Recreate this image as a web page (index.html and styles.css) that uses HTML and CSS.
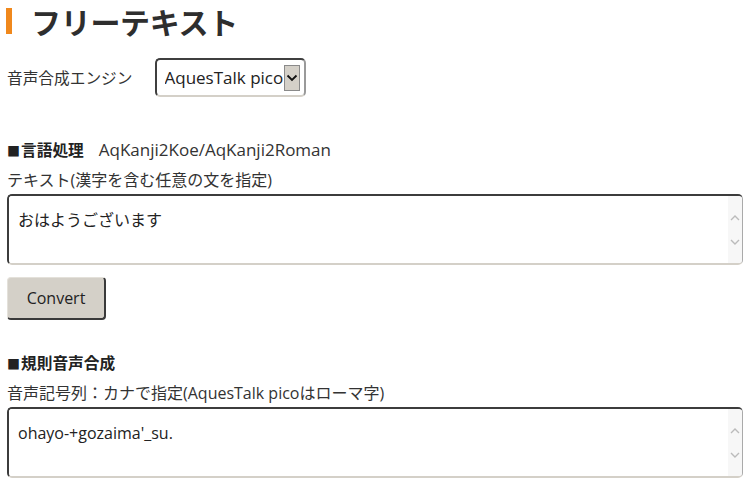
FILE: index.html
```html
<!DOCTYPE html>
<html lang="ja">
<head>
    <meta charset="UTF-8">
    <meta name="viewport" content="width=device-width, initial-scale=1.0">
    <title>フリーテキスト</title>
    <link rel="stylesheet" href="styles.css">
</head>
<body>
    <h1 class="title">フリーテキスト</h1>

    <div class="engine-row">
        <span class="engine-label">音声合成エンジン</span>
        <div class="select-box">
            <select id="engine">
                <option>AquesTalk pico</option>
            </select>
            <span class="select-arrow">
                <svg width="12" height="8" viewBox="0 0 12 8"><path d="M1.5 1.5 L6 6 L10.5 1.5" fill="none" stroke="#111" stroke-width="1.8"/></svg>
            </span>
        </div>
    </div>

    <h2 class="section"><span class="mark">■</span>言語処理<span class="sub">AqKanji2Koe/AqKanji2Roman</span></h2>
    <p class="field-label">テキスト(漢字を含む任意の文を指定)</p>
    <div class="text-box">
        <textarea id="src-text">おはようございます</textarea>
        <div class="scroll-col">
            <svg width="10" height="6" viewBox="0 0 10 6"><path d="M1 5 L5 1 L9 5" fill="none" stroke="#bbb" stroke-width="1.4"/></svg>
            <svg width="10" height="6" viewBox="0 0 10 6"><path d="M1 1 L5 5 L9 1" fill="none" stroke="#bbb" stroke-width="1.4"/></svg>
        </div>
    </div>
    <button class="btn" onclick="convert()">Convert</button>

    <h2 class="section section-synth"><span class="mark">■</span>規則音声合成</h2>
    <p class="field-label">音声記号列：カナで指定(AquesTalk picoはローマ字)</p>
    <div class="text-box">
        <textarea id="koe-text">ohayo-+gozaima'_su.</textarea>
        <div class="scroll-col">
            <svg width="10" height="6" viewBox="0 0 10 6"><path d="M1 5 L5 1 L9 5" fill="none" stroke="#bbb" stroke-width="1.4"/></svg>
            <svg width="10" height="6" viewBox="0 0 10 6"><path d="M1 1 L5 5 L9 1" fill="none" stroke="#bbb" stroke-width="1.4"/></svg>
        </div>
    </div>

    <script>
        function convert() {
            // stub: the real page calls the kanji converter here
            document.getElementById("koe-text").value = "ohayo-+gozaima'_su.";
        }
    </script>
</body>
</html>
```

FILE: styles.css
```css
body {
    margin: 0;
    padding: 0 9px 0 7px;
    font-family: "Open Sans", "Noto Sans CJK JP", sans-serif;
    font-size: 16px;
    color: #333;
    background: #fff;
}
.title {
    margin: 8px 0 0 -1px;
    padding-left: 19px;
    border-left: 6px solid #f0881c;
    font-family: "Noto Sans CJK JP", sans-serif;
    font-size: 30px;
    font-weight: bold;
    line-height: 26px;
    color: #2e2e2e;
    letter-spacing: -0.3px;
}

.engine-row {
    display: flex;
    align-items: center;
    margin-top: 24px;
    gap: 22px;
}
.engine-label {
    font-family: "Noto Sans CJK JP", sans-serif;
    font-size: 15.7px;
}
.select-box {
    display: flex;
    align-items: center;
    width: 151px;
    height: 39px;
    box-sizing: border-box;
    border: 2px solid #3f3f3f;
    border-right-color: #9a9a9a;
    border-bottom-color: #d4d0c8;
    border-radius: 5px;
    padding: 0 4px 0 8px;
}
.select-box select {
    appearance: none;
    -webkit-appearance: none;
    border: none;
    background: transparent;
    font-family: inherit;
    font-size: 17px;
    color: #222;
    padding: 0;
    width: 119px;
    outline: none;
}
.select-arrow {
    display: flex;
    align-items: center;
    justify-content: center;
    width: 17px;
    height: 24px;
    margin-left: auto;
    background: #d4d0c8;
    border: 1px solid #8a8a8a;
}

.section {
    margin: 41px 0 0;
    font-size: 15.7px;
    font-family: "Noto Sans CJK JP", sans-serif;
    font-weight: bold;
    line-height: 24px;
    color: #222;
}
.section-synth {
    margin-top: 31px;
}
.mark {
    font-size: 13px;
    margin-right: 1px;
}
.sub {
    font-family: "Open Sans", "Noto Sans CJK JP", sans-serif;
    font-weight: normal;
    font-size: 17px;
    color: #333;
    margin-left: 15px;
}
.field-label {
    margin: 4px 0 0;
    line-height: 26px;
    font-size: 16px;
}

.text-box {
    display: flex;
    height: 71px;
    margin-top: 1px;
    box-sizing: border-box;
    border: 2px solid #3c3c3c;
    border-right: 1px solid #aaa;
    border-bottom-color: #d4d0c8;
    border-radius: 5px;
    overflow: hidden;
}
.text-box textarea {
    flex: 1;
    border: none;
    outline: none;
    resize: none;
    padding: 14px 9px 10px;
    font-family: "Open Sans", "Noto Sans CJK JP", sans-serif;
    font-size: 16px;
    line-height: 20px;
    color: #222;
    overflow: hidden;
}
.scroll-col {
    width: 14px;
    background: #f7f7f7;
    display: flex;
    flex-direction: column;
    align-items: center;
    padding-top: 19px;
    gap: 18px;
}

.btn {
    display: block;
    margin-top: 12px;
    width: 99px;
    height: 43px;
    background: #d4d0c8;
    border: 1px solid #e4e1da;
    border-right: 2px solid #3a3a3a;
    border-bottom: 2px solid #3a3a3a;
    border-radius: 4px;
    font-family: "Open Sans", sans-serif;
    font-size: 16px;
    color: #222;
    padding: 0;
}
```
